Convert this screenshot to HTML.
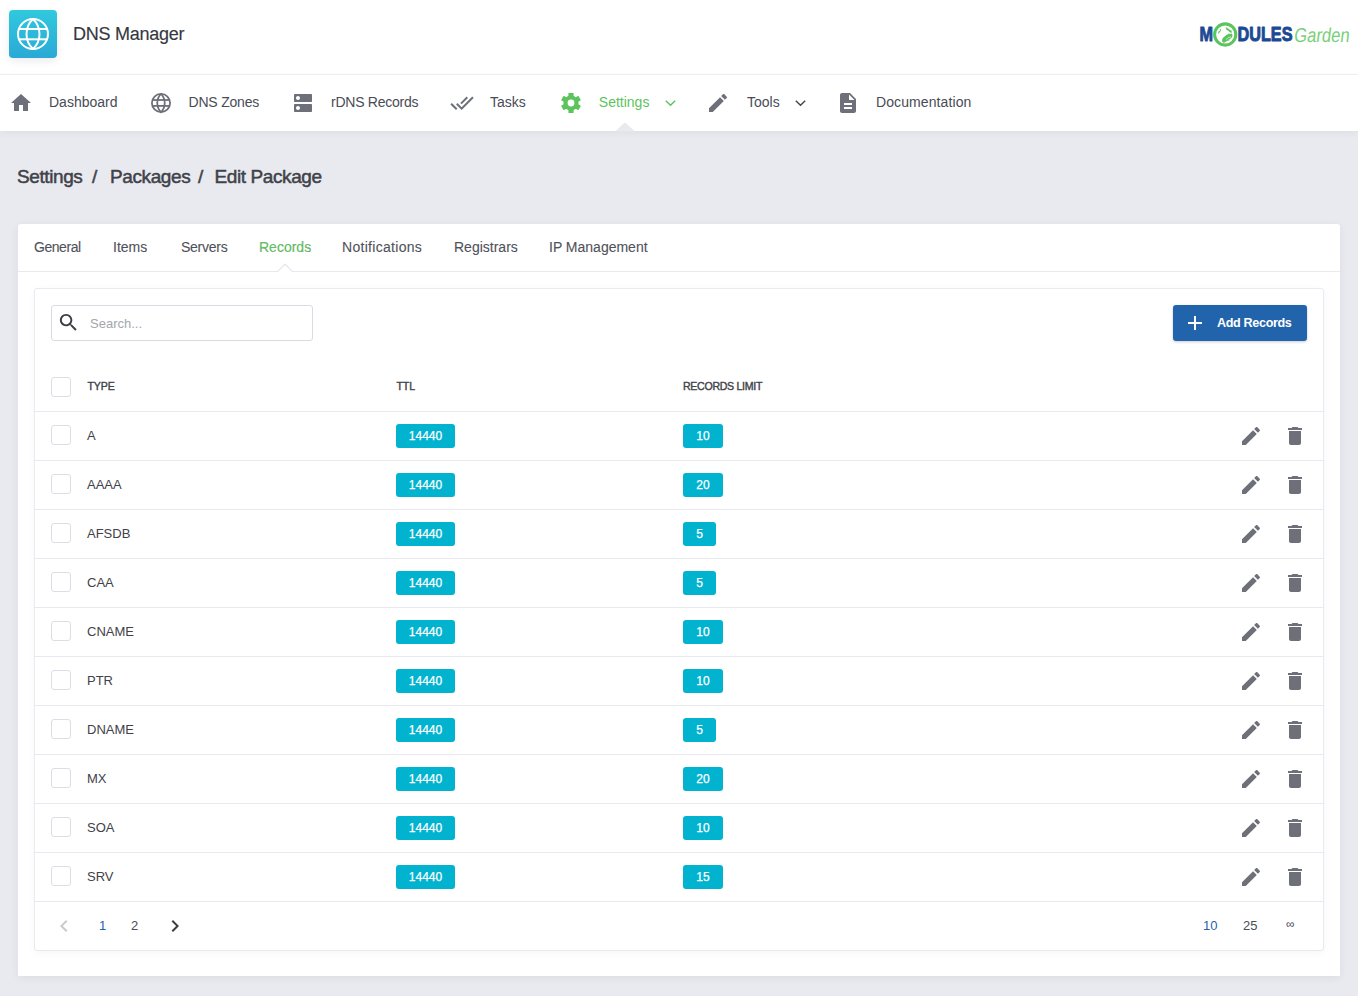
<!DOCTYPE html>
<html><head><meta charset="utf-8">
<style>
*{box-sizing:border-box;margin:0;padding:0}
html,body{width:1358px;height:996px;overflow:hidden}
body{background:#e9eaef;font-family:"Liberation Sans",sans-serif;position:relative;color:#3f4249}
.abs{position:absolute}
.t{position:absolute;white-space:nowrap;line-height:1}
#hdr{position:absolute;left:0;top:0;width:1358px;height:75px;background:#fff;border-bottom:1px solid #f0f0f0}
#nav{position:absolute;left:0;top:75px;width:1358px;height:56px;background:#fff;box-shadow:0 2px 8px rgba(0,0,0,.05)}
#logo{position:absolute;left:9px;top:10px;width:48px;height:48px;border-radius:4px;background:linear-gradient(180deg,#30c9dd,#2aa9d6);box-shadow:0 3px 8px rgba(0,0,0,.08)}
.nt{font-size:14px;color:#494c55}
.ic{position:absolute;fill:#6d7079}
#card{position:absolute;left:18px;top:224px;width:1322px;height:752px;background:#fff;border-radius:3px 3px 0 0;box-shadow:0 2px 10px rgba(0,0,0,.06)}
.tab{font-size:14px;color:#4f525a;-webkit-text-stroke:0.1px #4f525a}
#panel{position:absolute;left:34px;top:288px;width:1290px;height:663px;background:#fff;border:1px solid #e9eaef;border-radius:3px;box-shadow:0 2px 8px rgba(0,0,0,.04)}
.row{position:absolute;left:35px;width:1288px;height:49px;border-top:1px solid #e8e9ee}
.cb{position:absolute;left:16px;top:13px;width:20px;height:20px;border:1px solid #dcdee4;border-radius:3px;background:#fff}
.ty{position:absolute;left:52px;top:17px;font-size:13px;color:#3f4249;line-height:1;white-space:nowrap}
.badge{position:absolute;top:12px;height:24px;border-radius:3px;background:#02b3d0;color:#fff;font-size:12px;-webkit-text-stroke:0.25px #fff;line-height:24px;text-align:center}
.bc{top:167px;font-size:19px;letter-spacing:-0.4px;color:#3f4249;-webkit-text-stroke:0.5px #3f4249}
.pg{top:630px;font-size:13px;color:#4a4d55}
.th{font-size:10.6px;color:#3f4249;letter-spacing:-0.1px;-webkit-text-stroke:0.4px #3f4249}
</style></head><body>
<div id="hdr">
  <div id="logo">
    <svg width="48" height="48" viewBox="0 0 48 48" style="position:absolute;left:0;top:0">
      <g fill="none" stroke="#fff" stroke-width="2">
        <circle cx="24" cy="24" r="15"/>
        <path d="M24 9A20.56 20.56 0 0 0 24 39A20.56 20.56 0 0 0 24 9"/>
        <line x1="9.5" y1="19" x2="38.5" y2="19"/>
        <line x1="9.5" y1="29.3" x2="38.5" y2="29.3"/>
      </g>
    </svg>
  </div>
    <svg class="abs" style="left:1190px;top:15px" width="168" height="40" viewBox="1190 15 168 40">
    <g fill="#1b4a94" stroke="#1b4a94" stroke-width="0.9" stroke-linejoin="round" font-family="Liberation Sans" font-weight="bold" font-size="19.6">
    <text x="1199.5" y="41.2" textLength="13.5" lengthAdjust="spacingAndGlyphs">M</text>
    <text x="1237.5" y="41.2" textLength="55" lengthAdjust="spacingAndGlyphs">DULES</text>
    </g>
    <text x="1293.5" y="41.6" font-family="Liberation Sans" font-size="20" fill="#79cf79" textLength="55.5" lengthAdjust="spacingAndGlyphs" transform="translate(1293.5 41.6) skewX(-7) translate(-1293.5 -41.6)">Garden</text>
    <circle cx="1225.2" cy="34.5" r="10.6" fill="#fff" stroke="#5cc45c" stroke-width="3.1"/>
    <g fill="#5cc45c">
      <path d="M1218 33.2l.6-1.6 1.3-1.2.5-1.6.8.2-.3 1.6-1 1.4-1 1.4z"/>
      <path d="M1225.8 27.6l1.2-.2.8 1.2 1.4.4.6 1 1.6.6.5 1.8-1.2.3-1.5-.9-1-1.2-1.4-.4-.6-1.3z"/>
      <path d="M1222 41.2l.3-2.2.8-1.2 1-1.1 1.3-.6.7-1.1 1.6-.5.8-.9 1.6.3 1.8-.4.6 1.4-.3 1.8-.8 1.3-1 .8-.6 1.2-1.3.9-1.2.1-1.3.5-1.2 1-1.5.3z"/>
    </g>
    <path d="M1226 39.5q2.5-2.6 5-2.6M1227.6 40.8q2-1.8 3.8-1.8" fill="none" stroke="#fff" stroke-width="0.6"/>
  </svg>
  <div class="t" style="left:73px;top:25px;font-size:18px;letter-spacing:-0.25px;color:#35383f;-webkit-text-stroke:0.15px #35383f">DNS Manager</div>
</div>
<div id="nav">
  <svg class="ic" style="left:9px;top:16px" width="24" height="24" viewBox="0 0 24 24"><path d="M10 20v-6h4v6h5v-8h3L12 3 2 12h3v8z"/></svg>
  <div class="t nt" style="left:49px;top:20px">Dashboard</div>
  <svg class="ic" style="left:149px;top:16px" width="24" height="24" viewBox="0 0 24 24"><g fill="none" stroke="#6d7079" stroke-width="1.8"><circle cx="12" cy="12" r="9.1"/><path d="M12 2.9A13 13 0 0 0 12 21.1A13 13 0 0 0 12 2.9"/><line x1="3" y1="9" x2="21" y2="9"/><line x1="3" y1="14.9" x2="21" y2="14.9"/></g></svg>
  <div class="t nt" style="left:188.5px;top:20px;letter-spacing:-0.2px">DNS Zones</div>
  <svg class="ic" style="left:291px;top:16px" width="24" height="24" viewBox="0 0 24 24"><path d="M20 13H4c-.55 0-1 .45-1 1v6c0 .55.45 1 1 1h16c.55 0 1-.45 1-1v-6c0-.55-.45-1-1-1zM7 19c-1.1 0-2-.9-2-2s.9-2 2-2 2 .9 2 2-.9 2-2 2zM20 3H4c-.55 0-1 .45-1 1v6c0 .55.45 1 1 1h16c.55 0 1-.45 1-1V4c0-.55-.45-1-1-1zM7 9c-1.1 0-2-.9-2-2s.9-2 2-2 2 .9 2 2-.9 2-2 2z"/></svg>
  <div class="t nt" style="left:331px;top:20px;letter-spacing:-0.25px">rDNS Records</div>
  <svg class="ic" style="left:450px;top:16px" width="24" height="24" viewBox="0 0 24 24"><path d="M18 7l-1.41-1.41-6.34 6.34 1.41 1.41L18 7zm4.24-1.41L11.66 16.17 7.48 12l-1.41 1.41L11.66 19l12-12-1.42-1.41zM.41 13.41L6 19l1.41-1.41L1.83 12 .41 13.41z"/></svg>
  <div class="t nt" style="left:490px;top:20px">Tasks</div>
  <svg class="ic" style="left:559.6px;top:17px" width="22" height="22" viewBox="0 0 22 22"><g fill="#5cc45c"><circle cx="11" cy="11" r="7.6"/><rect x="8.4" y="1" width="5.2" height="20" rx="0.6"/><rect x="8.4" y="1" width="5.2" height="20" rx="0.6" transform="rotate(60 11 11)"/><rect x="8.4" y="1" width="5.2" height="20" rx="0.6" transform="rotate(120 11 11)"/></g><circle cx="11" cy="11" r="3.4" fill="#fff"/></svg>
  <div class="t nt" style="left:598.8px;top:20px;color:#5cc45c">Settings</div>
  <svg class="abs" style="left:660px;top:93px;top:18px" width="24" height="20" viewBox="0 0 24 20"><polyline points="5.8,7.8 10.5,12.3 15.2,7.8" fill="none" stroke="#5cc45c" stroke-width="1.45"/></svg>
  <svg class="ic" style="left:706px;top:16px" width="24" height="24" viewBox="0 0 24 24"><path d="M3 17.25V21h3.75L17.81 9.94l-3.75-3.75L3 17.25zM20.71 7.04c.39-.39.39-1.02 0-1.41l-2.34-2.34c-.39-.39-1.02-.39-1.41 0l-1.83 1.83 3.75 3.75 1.83-1.83z"/></svg>
  <div class="t nt" style="left:747px;top:20px">Tools</div>
  <svg class="abs" style="left:790px;top:18px" width="24" height="20" viewBox="0 0 24 20"><polyline points="5.8,7.8 10.5,12.3 15.2,7.8" fill="none" stroke="#43464e" stroke-width="1.45"/></svg>
  <svg class="ic" style="left:836px;top:16px" width="24" height="24" viewBox="0 0 24 24"><path d="M14 2H6c-1.1 0-1.99.9-1.99 2L4 20c0 1.1.89 2 1.99 2H18c1.1 0 2-.9 2-2V8l-6-6zm2 16H8v-2h8v2zm0-4H8v-2h8v2zm-3-5V3.5L18.5 9H13z"/></svg>
  <div class="t nt" style="left:876px;top:20px;letter-spacing:0.1px">Documentation</div>
  <svg class="abs" style="left:612px;top:46px" width="26" height="11" viewBox="0 0 26 11"><path d="M3 10.5L11.6 2.4Q13 1.2 14.4 2.4L23 10.5Z" fill="#e9eaef"/></svg>
</div>
<div class="t bc" style="left:17px">Settings</div>
<div class="t bc" style="left:92px">/</div>
<div class="t bc" style="left:110px">Packages</div>
<div class="t bc" style="left:198px">/</div>
<div class="t bc" style="left:214.5px">Edit Package</div>
<div id="card">
  <div class="t tab" style="left:16px;top:16px;letter-spacing:-0.45px">General</div>
  <div class="t tab" style="left:95px;top:16px">Items</div>
  <div class="t tab" style="left:163px;top:16px;letter-spacing:-0.25px">Servers</div>
  <div class="t tab" style="left:241px;top:16px;color:#5cc45c">Records</div>
  <div class="t tab" style="left:324px;top:16px;letter-spacing:0.3px">Notifications</div>
  <div class="t tab" style="left:436px;top:16px">Registrars</div>
  <div class="t tab" style="left:531px;top:16px">IP Management</div>
  <div class="abs" style="left:0;top:47px;width:1322px;height:1px;background:#e8e9ef"></div>
  <svg class="abs" style="left:258px;top:39px" width="18" height="10" viewBox="0 0 18 10"><polyline points="1.5,8.5 9,1.2 16.5,8.5" fill="#fff" stroke="#e8e9ef" stroke-width="1.2"/><rect x="3" y="8" width="12" height="2" fill="#fff"/></svg>
</div>
<div id="panel">
  <div class="abs" style="left:16px;top:16px;width:262px;height:36px;border:1px solid #d9dbe2;border-radius:3px;background:#fff">
    <svg class="abs" style="left:5px;top:5px" width="23" height="23" viewBox="0 0 24 24"><path fill="#3a3d44" d="M15.5 14h-.79l-.28-.27C15.41 12.59 16 11.11 16 9.5 16 5.91 13.09 3 9.5 3S3 5.91 3 9.5 5.91 16 9.5 16c1.61 0 3.09-.59 4.23-1.57l.27.28v.79l5 4.99L20.49 19l-4.99-5zm-6 0C7.01 14 5 11.99 5 9.5S7.01 5 9.5 5 14 7.01 14 9.5 11.99 14 9.5 14z"/></svg>
    <div class="t" style="left:38px;top:11px;font-size:13px;color:#a3a6ad">Search...</div>
  </div>
  <div class="abs" style="left:1138px;top:16px;width:134px;height:36px;border-radius:3px;background:#2264ab;box-shadow:0 1px 3px rgba(0,0,0,.2)">
    <svg class="abs" style="left:13.7px;top:10px" width="16" height="16" viewBox="0 0 16 16"><path d="M8 1V15M1 8H15" stroke="#fff" stroke-width="2"/></svg>
    <div class="t" style="left:44px;top:12px;font-size:12.6px;letter-spacing:-0.35px;font-weight:bold;color:#fff">Add Records</div>
  </div>
  <div class="cb" style="left:16px;top:88px"></div>
  <div class="t th" style="left:52.5px;top:92px">TYPE</div>
  <div class="t th" style="left:361.5px;top:92px">TTL</div>
  <div class="abs" style="left:0;top:612px;width:1288px;height:1px;background:#e8e9ee"></div>
  <svg class="abs" style="left:16.6px;top:625px" width="24" height="24" viewBox="0 0 24 24"><path fill="#c9cacd" d="M15.41 7.41L14 6l-6 6 6 6 1.41-1.41L10.83 12z"/></svg>
  <div class="t pg" style="left:64px;color:#2264ab">1</div>
  <div class="t pg" style="left:96px">2</div>
  <svg class="abs" style="left:127.6px;top:625px" width="24" height="24" viewBox="0 0 24 24"><path fill="#3b3e45" d="M10 6L8.59 7.41 13.17 12l-4.58 4.59L10 18l6-6z"/></svg>
  <div class="t pg" style="left:1168px;color:#2264ab">10</div>
  <div class="t pg" style="left:1208px">25</div>
  <div class="t pg" style="left:1251px;font-size:12px;top:629px">&#8734;</div>
  <div class="t th" style="left:648px;top:92px;letter-spacing:-0.3px">RECORDS LIMIT</div>
</div>

<div id="rows" class="abs" style="left:0;top:289px">
<div class="row" style="left:35px;top:122px">
  <div class="cb"></div><div class="ty">A</div>
  <div class="badge" style="left:361px;width:59px">14440</div>
  <div class="badge" style="left:648px;width:40px">10</div>
  <svg class="ic" style="left:1204px;top:12px" width="24" height="24" viewBox="0 0 24 24"><path d="M3 17.25V21h3.75L17.81 9.94l-3.75-3.75L3 17.25zM20.71 7.04c.39-.39.39-1.02 0-1.41l-2.34-2.34c-.39-.39-1.02-.39-1.41 0l-1.83 1.83 3.75 3.75 1.83-1.83z"/></svg>
  <svg class="ic" style="left:1248px;top:12px" width="24" height="24" viewBox="0 0 24 24"><path d="M6 19c0 1.1.9 2 2 2h8c1.1 0 2-.9 2-2V7H6v12zM19 4h-3.5l-1-1h-5l-1 1H5v2h14V4z"/></svg>
</div>
<div class="row" style="left:35px;top:171px">
  <div class="cb"></div><div class="ty">AAAA</div>
  <div class="badge" style="left:361px;width:59px">14440</div>
  <div class="badge" style="left:648px;width:40px">20</div>
  <svg class="ic" style="left:1204px;top:12px" width="24" height="24" viewBox="0 0 24 24"><path d="M3 17.25V21h3.75L17.81 9.94l-3.75-3.75L3 17.25zM20.71 7.04c.39-.39.39-1.02 0-1.41l-2.34-2.34c-.39-.39-1.02-.39-1.41 0l-1.83 1.83 3.75 3.75 1.83-1.83z"/></svg>
  <svg class="ic" style="left:1248px;top:12px" width="24" height="24" viewBox="0 0 24 24"><path d="M6 19c0 1.1.9 2 2 2h8c1.1 0 2-.9 2-2V7H6v12zM19 4h-3.5l-1-1h-5l-1 1H5v2h14V4z"/></svg>
</div>
<div class="row" style="left:35px;top:220px">
  <div class="cb"></div><div class="ty">AFSDB</div>
  <div class="badge" style="left:361px;width:59px">14440</div>
  <div class="badge" style="left:648px;width:33px">5</div>
  <svg class="ic" style="left:1204px;top:12px" width="24" height="24" viewBox="0 0 24 24"><path d="M3 17.25V21h3.75L17.81 9.94l-3.75-3.75L3 17.25zM20.71 7.04c.39-.39.39-1.02 0-1.41l-2.34-2.34c-.39-.39-1.02-.39-1.41 0l-1.83 1.83 3.75 3.75 1.83-1.83z"/></svg>
  <svg class="ic" style="left:1248px;top:12px" width="24" height="24" viewBox="0 0 24 24"><path d="M6 19c0 1.1.9 2 2 2h8c1.1 0 2-.9 2-2V7H6v12zM19 4h-3.5l-1-1h-5l-1 1H5v2h14V4z"/></svg>
</div>
<div class="row" style="left:35px;top:269px">
  <div class="cb"></div><div class="ty">CAA</div>
  <div class="badge" style="left:361px;width:59px">14440</div>
  <div class="badge" style="left:648px;width:33px">5</div>
  <svg class="ic" style="left:1204px;top:12px" width="24" height="24" viewBox="0 0 24 24"><path d="M3 17.25V21h3.75L17.81 9.94l-3.75-3.75L3 17.25zM20.71 7.04c.39-.39.39-1.02 0-1.41l-2.34-2.34c-.39-.39-1.02-.39-1.41 0l-1.83 1.83 3.75 3.75 1.83-1.83z"/></svg>
  <svg class="ic" style="left:1248px;top:12px" width="24" height="24" viewBox="0 0 24 24"><path d="M6 19c0 1.1.9 2 2 2h8c1.1 0 2-.9 2-2V7H6v12zM19 4h-3.5l-1-1h-5l-1 1H5v2h14V4z"/></svg>
</div>
<div class="row" style="left:35px;top:318px">
  <div class="cb"></div><div class="ty">CNAME</div>
  <div class="badge" style="left:361px;width:59px">14440</div>
  <div class="badge" style="left:648px;width:40px">10</div>
  <svg class="ic" style="left:1204px;top:12px" width="24" height="24" viewBox="0 0 24 24"><path d="M3 17.25V21h3.75L17.81 9.94l-3.75-3.75L3 17.25zM20.71 7.04c.39-.39.39-1.02 0-1.41l-2.34-2.34c-.39-.39-1.02-.39-1.41 0l-1.83 1.83 3.75 3.75 1.83-1.83z"/></svg>
  <svg class="ic" style="left:1248px;top:12px" width="24" height="24" viewBox="0 0 24 24"><path d="M6 19c0 1.1.9 2 2 2h8c1.1 0 2-.9 2-2V7H6v12zM19 4h-3.5l-1-1h-5l-1 1H5v2h14V4z"/></svg>
</div>
<div class="row" style="left:35px;top:367px">
  <div class="cb"></div><div class="ty">PTR</div>
  <div class="badge" style="left:361px;width:59px">14440</div>
  <div class="badge" style="left:648px;width:40px">10</div>
  <svg class="ic" style="left:1204px;top:12px" width="24" height="24" viewBox="0 0 24 24"><path d="M3 17.25V21h3.75L17.81 9.94l-3.75-3.75L3 17.25zM20.71 7.04c.39-.39.39-1.02 0-1.41l-2.34-2.34c-.39-.39-1.02-.39-1.41 0l-1.83 1.83 3.75 3.75 1.83-1.83z"/></svg>
  <svg class="ic" style="left:1248px;top:12px" width="24" height="24" viewBox="0 0 24 24"><path d="M6 19c0 1.1.9 2 2 2h8c1.1 0 2-.9 2-2V7H6v12zM19 4h-3.5l-1-1h-5l-1 1H5v2h14V4z"/></svg>
</div>
<div class="row" style="left:35px;top:416px">
  <div class="cb"></div><div class="ty">DNAME</div>
  <div class="badge" style="left:361px;width:59px">14440</div>
  <div class="badge" style="left:648px;width:33px">5</div>
  <svg class="ic" style="left:1204px;top:12px" width="24" height="24" viewBox="0 0 24 24"><path d="M3 17.25V21h3.75L17.81 9.94l-3.75-3.75L3 17.25zM20.71 7.04c.39-.39.39-1.02 0-1.41l-2.34-2.34c-.39-.39-1.02-.39-1.41 0l-1.83 1.83 3.75 3.75 1.83-1.83z"/></svg>
  <svg class="ic" style="left:1248px;top:12px" width="24" height="24" viewBox="0 0 24 24"><path d="M6 19c0 1.1.9 2 2 2h8c1.1 0 2-.9 2-2V7H6v12zM19 4h-3.5l-1-1h-5l-1 1H5v2h14V4z"/></svg>
</div>
<div class="row" style="left:35px;top:465px">
  <div class="cb"></div><div class="ty">MX</div>
  <div class="badge" style="left:361px;width:59px">14440</div>
  <div class="badge" style="left:648px;width:40px">20</div>
  <svg class="ic" style="left:1204px;top:12px" width="24" height="24" viewBox="0 0 24 24"><path d="M3 17.25V21h3.75L17.81 9.94l-3.75-3.75L3 17.25zM20.71 7.04c.39-.39.39-1.02 0-1.41l-2.34-2.34c-.39-.39-1.02-.39-1.41 0l-1.83 1.83 3.75 3.75 1.83-1.83z"/></svg>
  <svg class="ic" style="left:1248px;top:12px" width="24" height="24" viewBox="0 0 24 24"><path d="M6 19c0 1.1.9 2 2 2h8c1.1 0 2-.9 2-2V7H6v12zM19 4h-3.5l-1-1h-5l-1 1H5v2h14V4z"/></svg>
</div>
<div class="row" style="left:35px;top:514px">
  <div class="cb"></div><div class="ty">SOA</div>
  <div class="badge" style="left:361px;width:59px">14440</div>
  <div class="badge" style="left:648px;width:40px">10</div>
  <svg class="ic" style="left:1204px;top:12px" width="24" height="24" viewBox="0 0 24 24"><path d="M3 17.25V21h3.75L17.81 9.94l-3.75-3.75L3 17.25zM20.71 7.04c.39-.39.39-1.02 0-1.41l-2.34-2.34c-.39-.39-1.02-.39-1.41 0l-1.83 1.83 3.75 3.75 1.83-1.83z"/></svg>
  <svg class="ic" style="left:1248px;top:12px" width="24" height="24" viewBox="0 0 24 24"><path d="M6 19c0 1.1.9 2 2 2h8c1.1 0 2-.9 2-2V7H6v12zM19 4h-3.5l-1-1h-5l-1 1H5v2h14V4z"/></svg>
</div>
<div class="row" style="left:35px;top:563px">
  <div class="cb"></div><div class="ty">SRV</div>
  <div class="badge" style="left:361px;width:59px">14440</div>
  <div class="badge" style="left:648px;width:40px">15</div>
  <svg class="ic" style="left:1204px;top:12px" width="24" height="24" viewBox="0 0 24 24"><path d="M3 17.25V21h3.75L17.81 9.94l-3.75-3.75L3 17.25zM20.71 7.04c.39-.39.39-1.02 0-1.41l-2.34-2.34c-.39-.39-1.02-.39-1.41 0l-1.83 1.83 3.75 3.75 1.83-1.83z"/></svg>
  <svg class="ic" style="left:1248px;top:12px" width="24" height="24" viewBox="0 0 24 24"><path d="M6 19c0 1.1.9 2 2 2h8c1.1 0 2-.9 2-2V7H6v12zM19 4h-3.5l-1-1h-5l-1 1H5v2h14V4z"/></svg>
</div>
</div>
</body></html>
